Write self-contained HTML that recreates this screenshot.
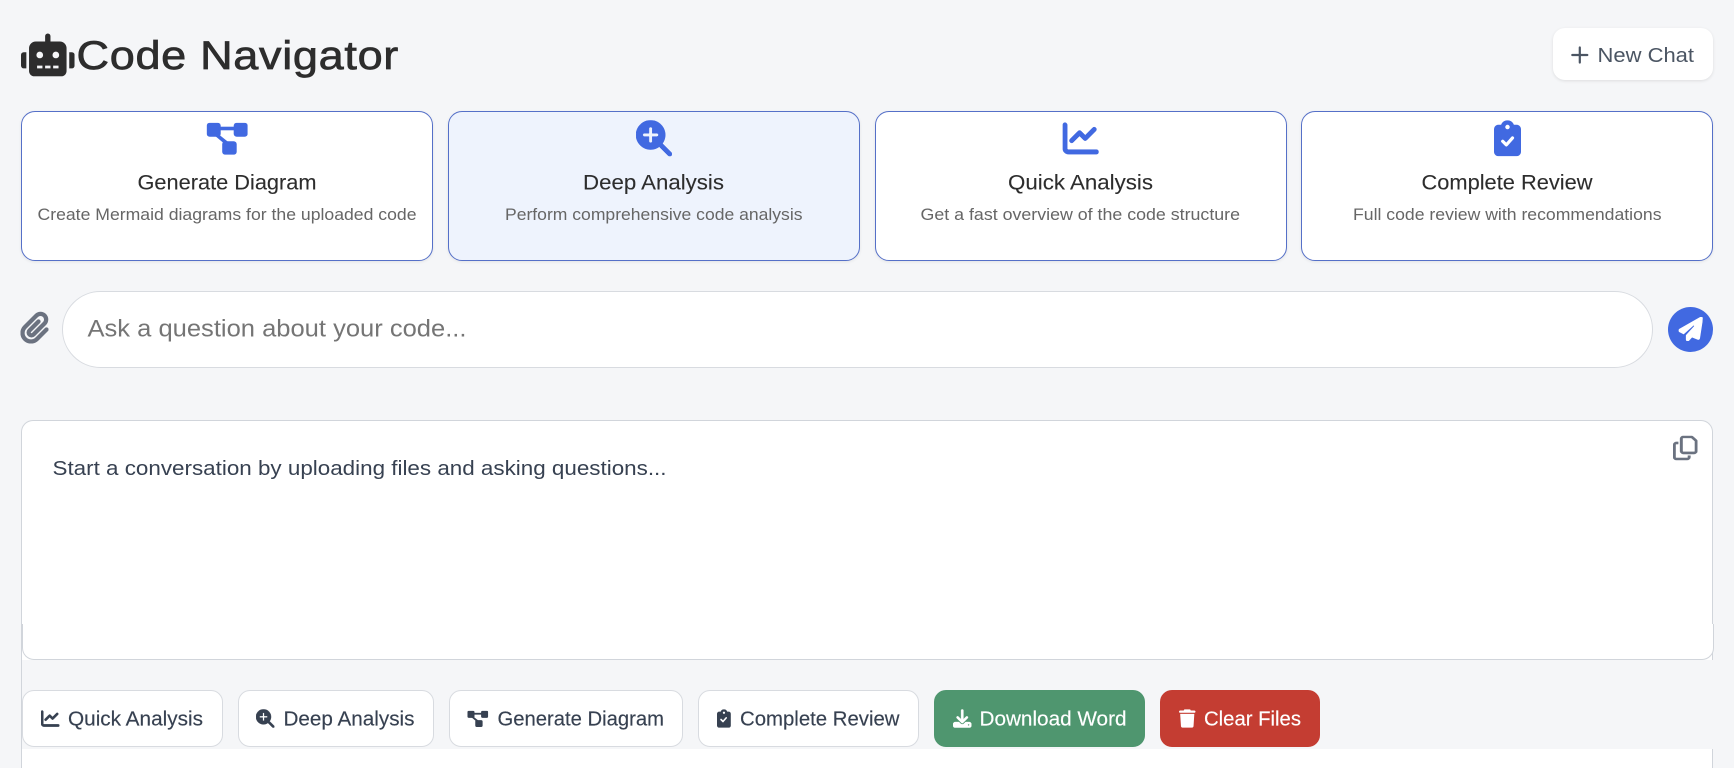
<!DOCTYPE html>
<html lang="en">
<head>
<meta charset="utf-8">
<title>Code Navigator</title>
<style>
html,body{margin:0;padding:0;width:1734px;height:768px;overflow:hidden;background:#f5f6f8;font-family:"Liberation Sans",Arial,sans-serif}
#wrap{position:relative;width:1734px;height:768px;overflow:hidden}
.b{position:absolute;box-sizing:border-box}
.card{top:111px;height:150px;width:411.5px;background:#fff;border:1px solid #5570c8;border-radius:14px;box-shadow:0 1px 3px rgba(0,0,0,.08)}
.btn{top:690px;height:57px;background:#fff;border:1px solid #d8dbe0;border-radius:12px}
svg.o{position:absolute;left:0;top:0;display:block}
text{font-family:"Liberation Sans",Arial,sans-serif}
.tt{font-size:21.6px;fill:#2d2d2d;stroke:#2d2d2d;stroke-width:.1px}
.ds{font-size:17px;fill:#666}
.bt{font-size:20px;fill:#374151;stroke:#374151;stroke-width:.15px}
.bw{font-size:20px;fill:#fff;stroke:#fff;stroke-width:.15px}
.ib{fill:#4169e1;stroke:#4169e1;stroke-width:7;stroke-linejoin:round}
.is{fill:#374151;stroke:#374151;stroke-width:12;stroke-linejoin:round}
.iw{fill:#fff;stroke:#fff;stroke-width:10;stroke-linejoin:round}
</style>
</head>
<body>
<div id="wrap">
<div class="b" style="left:1553px;top:28px;width:160px;height:52px;background:#fff;border-radius:12px;box-shadow:0 1px 3px rgba(0,0,0,.1)"></div>

<div class="b card" style="left:21px"></div>
<div class="b card" style="left:448px;background:#eef3fd"></div>
<div class="b card" style="left:875px"></div>
<div class="b card" style="left:1301px;width:412px"></div>

<div class="b" style="left:62px;top:291px;width:1591px;height:77px;background:#fff;border:1px solid #d8dbe0;border-radius:38.5px"></div>
<div class="b" style="left:1668px;top:307px;width:45px;height:45px;background:#4169e1;border-radius:50%"></div>

<div class="b" style="left:21px;top:420px;width:1692px;height:348px;background:#fff;border:1px solid #d1d5db;border-bottom:0;border-radius:12px 12px 0 0"></div>
<div class="b" style="left:22px;top:660px;width:1692px;height:89px;background:#f5f6f8"></div>
<div class="b" style="left:22px;top:624px;width:1692px;height:36px;background:#fff;border:1px solid #d1d5db;border-top:0;border-radius:0 0 12px 12px"></div>

<div class="b btn" style="left:22px;width:200.5px"></div>
<div class="b btn" style="left:238px;width:196px"></div>
<div class="b btn" style="left:449px;width:234px"></div>
<div class="b btn" style="left:698px;width:220.5px"></div>
<div class="b btn" style="left:934px;width:211px;background:#4f966f;border-color:#4f966f"></div>
<div class="b btn" style="left:1160px;width:160px;background:#c43d32;border-color:#c43d32"></div>

<svg class="o" width="1734" height="768" viewBox="0 0 1734 768" xmlns="http://www.w3.org/2000/svg">
  <defs>
    <g id="dg">
      <rect x="0" y="0" width="14" height="14" rx="3"/>
      <rect x="27" y="0" width="14" height="14" rx="3"/>
      <rect x="15.5" y="18.5" width="14.5" height="13.5" rx="3"/>
      <rect x="12" y="4" width="17" height="3.6"/>
      <path d="M7 12l3.2-1.8L22.5 20l-3 2.6z"/>
    </g>
  </defs>

  <!-- robot -->
  <svg x="21" y="33.5" width="53.6" height="42.9" viewBox="0 0 640 512"><path fill="#2d2d2d" d="M32,224H64V416H32A31.96166,31.96166,0,0,1,0,384V256A31.96166,31.96166,0,0,1,32,224Zm512-48V448a64.06328,64.06328,0,0,1-64,64H160a64.06328,64.06328,0,0,1-64-64V176a79.974,79.974,0,0,1,80-80H288V32a32,32,0,0,1,64,0V96H464A79.974,79.974,0,0,1,544,176ZM264,256a40,40,0,1,0-40,40A39.997,39.997,0,0,0,264,256Zm-8,128H192v32h64Zm96,0H288v32h64ZM456,256a40,40,0,1,0-40,40A39.997,39.997,0,0,0,456,256Zm-8,128H384v32h64ZM640,256V384a31.96166,31.96166,0,0,1-32,32H576V224h32A31.96166,31.96166,0,0,1,640,256Z"/></svg>
  <text x="76.5" y="69" font-size="40" letter-spacing="0.6" fill="#2d2d2d" stroke="#2d2d2d" stroke-width=".7" textLength="322.5" lengthAdjust="spacingAndGlyphs">Code Navigator</text>

  <!-- new chat -->
  <path d="M1579.8 47.5v15M1572.3 55h15" stroke="#4b5563" stroke-width="2.2" fill="none" stroke-linecap="round"/>
  <text x="1597.5" y="62" font-size="20" fill="#4b5563" textLength="96.5" lengthAdjust="spacingAndGlyphs">New Chat</text>

  <!-- card icons -->
  <svg x="206.7" y="122.7" width="41" height="32" viewBox="0 0 41 32" fill="#4169e1"><use href="#dg"/></svg>
  <svg x="636" y="120.3" width="36" height="36" viewBox="0 0 512 512"><path class="ib" d="M416 208c0 45.9-14.9 88.3-40 122.7L502.6 457.4c12.5 12.5 12.5 32.8 0 45.3s-32.8 12.5-45.3 0L330.7 376c-34.4 25.2-76.8 40-122.7 40C93.1 416 0 322.9 0 208S93.1 0 208 0S416 93.1 416 208zM184 296c0 13.3 10.7 24 24 24s24-10.7 24-24V232h64c13.3 0 24-10.7 24-24s-10.7-24-24-24H232V120c0-13.3-10.7-24-24-24s-24 10.7-24 24v64H120c-13.3 0-24 10.7-24 24s10.7 24 24 24h64v64z"/></svg>
  <svg x="1062.7" y="120.4" width="36" height="36" viewBox="0 0 512 512"><path class="ib" d="M64 64c0-17.7-14.3-32-32-32S0 46.3 0 64V400c0 44.2 35.8 80 80 80H480c17.7 0 32-14.3 32-32s-14.3-32-32-32H80c-8.8 0-16-7.2-16-16V64zm406.6 86.6c12.5-12.5 12.5-32.8 0-45.3s-32.8-12.5-45.3 0L320 210.7l-57.4-57.4c-12.5-12.5-32.8-12.5-45.3 0l-112 112c-12.5 12.5-12.5 32.8 0 45.3s32.8 12.5 45.3 0L240 221.3l57.4 57.4c12.5 12.5 32.8 12.5 45.3 0l128-128z"/></svg>
  <svg x="1494" y="120.3" width="27" height="36" viewBox="0 0 384 512"><path fill="#4169e1" d="M192 0c-41.8 0-77.4 26.7-90.5 64H64C28.7 64 0 92.7 0 128V448c0 35.3 28.7 64 64 64H320c35.3 0 64-28.7 64-64V128c0-35.3-28.7-64-64-64H282.5C269.4 26.7 233.8 0 192 0zm0 64a32 32 0 1 1 0 64 32 32 0 1 1 0-64z"/></svg>
  <path d="M1502.7 141.3l3.6 3.6 6.2-7" fill="none" stroke="#fff" stroke-width="3.2" stroke-linecap="round" stroke-linejoin="round"/>

  <!-- card text -->
  <text class="tt" x="137.5" y="189.3" textLength="179" lengthAdjust="spacingAndGlyphs">Generate Diagram</text>
  <text class="ds" x="37.5" y="220" textLength="379" lengthAdjust="spacingAndGlyphs">Create Mermaid diagrams for the uploaded code</text>
  <text class="tt" x="583" y="189.3" textLength="141" lengthAdjust="spacingAndGlyphs">Deep Analysis</text>
  <text class="ds" x="505" y="220" textLength="297.5" lengthAdjust="spacingAndGlyphs">Perform comprehensive code analysis</text>
  <text class="tt" x="1008" y="189.3" textLength="145" lengthAdjust="spacingAndGlyphs">Quick Analysis</text>
  <text class="ds" x="920.5" y="220" textLength="319.5" lengthAdjust="spacingAndGlyphs">Get a fast overview of the code structure</text>
  <text class="tt" x="1421.5" y="189.3" textLength="171" lengthAdjust="spacingAndGlyphs">Complete Review</text>
  <text class="ds" x="1353" y="220" textLength="308.5" lengthAdjust="spacingAndGlyphs">Full code review with recommendations</text>

  <!-- input row -->
  <svg x="20.5" y="311.5" width="28" height="32" viewBox="0 0 448 512"><path fill="#6b7280" stroke="#6b7280" stroke-width="12" stroke-linejoin="round" d="M364.2 83.8c-24.4-24.4-64-24.4-88.4 0l-184 184c-42.1 42.1-42.1 110.3 0 152.4s110.3 42.1 152.4 0l152-152c10.9-10.9 28.7-10.9 39.6 0s10.9 28.7 0 39.6l-152 152c-64 64-167.6 64-231.6 0s-64-167.6 0-231.6l184-184c46.3-46.3 121.3-46.3 167.6 0s46.3 121.3 0 167.6l-176 176c-28.6 28.6-75 28.6-103.6 0s-28.6-75 0-103.6l144-144c10.9-10.9 28.7-10.9 39.6 0s10.9 28.7 0 39.6l-144 144c-6.7 6.7-6.7 17.7 0 24.4s17.7 6.7 24.4 0l176-176c24.4-24.4 24.4-64 0-88.4z"/></svg>
  <text x="87.5" y="336.7" font-size="24" fill="#757575" textLength="379" lengthAdjust="spacingAndGlyphs">Ask a question about your code...</text>
  <svg x="1678.7" y="317" width="24" height="24" viewBox="0 0 512 512"><path fill="#fff" stroke="#fff" stroke-width="14" stroke-linejoin="round" d="M498.1 5.6c10.1 7 15.4 19.1 13.5 31.2l-64 416c-1.5 9.7-7.4 18.2-16 23s-18.9 5.4-28 1.6L284 427.7l-68.5 74.1c-8.9 9.7-22.9 12.9-35.2 8.1S160 493.2 160 480V396.4c0-4 1.5-7.8 4.2-10.7L331.8 202.8c5.8-6.3 5.6-16-.4-22s-15.7-6.4-22-.7L106 360.8 17.7 316.6C7.1 311.3 .3 300.7 0 288.9s5.9-22.8 16.1-28.7l448-256c10.7-6.1 23.9-5.5 34 1.4z"/></svg>

  <!-- response -->
  <text x="52.5" y="475" font-size="20" fill="#374151" textLength="614" lengthAdjust="spacingAndGlyphs">Start a conversation by uploading files and asking questions...</text>
  <svg x="1673" y="435.7" width="24.5" height="24.5" viewBox="0 0 448 512" preserveAspectRatio="none"><path fill="#6b7280" stroke="#6b7280" stroke-width="6" d="M384 336H192c-8.8 0-16-7.2-16-16V64c0-8.8 7.2-16 16-16l140.1 0L400 115.9V320c0 8.8-7.2 16-16 16zM192 384H384c35.3 0 64-28.7 64-64V115.9c0-12.7-5.1-24.9-14.1-33.9L366.1 14.1c-9-9-21.2-14.1-33.9-14.1H192c-35.3 0-64 28.7-64 64V320c0 35.3 28.7 64 64 64zM64 128c-35.3 0-64 28.7-64 64V448c0 35.3 28.7 64 64 64H256c35.3 0 64-28.7 64-64V416H272v32c0 8.8-7.2 16-16 16H64c-8.8 0-16-7.2-16-16V192c0-8.8 7.2-16 16-16H96V128H64z"/></svg>

  <!-- button icons -->
  <svg x="41" y="709.3" width="18.5" height="18.5" viewBox="0 0 512 512"><path class="is" d="M64 64c0-17.7-14.3-32-32-32S0 46.3 0 64V400c0 44.2 35.8 80 80 80H480c17.7 0 32-14.3 32-32s-14.3-32-32-32H80c-8.8 0-16-7.2-16-16V64zm406.6 86.6c12.5-12.5 12.5-32.8 0-45.3s-32.8-12.5-45.3 0L320 210.7l-57.4-57.4c-12.5-12.5-32.8-12.5-45.3 0l-112 112c-12.5 12.5-12.5 32.8 0 45.3s32.8 12.5 45.3 0L240 221.3l57.4 57.4c12.5 12.5 32.8 12.5 45.3 0l128-128z"/></svg>
  <svg x="256" y="709.3" width="18.5" height="18.5" viewBox="0 0 512 512"><path class="is" d="M416 208c0 45.9-14.9 88.3-40 122.7L502.6 457.4c12.5 12.5 12.5 32.8 0 45.3s-32.8 12.5-45.3 0L330.7 376c-34.4 25.2-76.8 40-122.7 40C93.1 416 0 322.9 0 208S93.1 0 208 0S416 93.1 416 208zM184 296c0 13.3 10.7 24 24 24s24-10.7 24-24V232h64c13.3 0 24-10.7 24-24s-10.7-24-24-24H232V120c0-13.3-10.7-24-24-24s-24 10.7-24 24v64H120c-13.3 0-24 10.7-24 24s10.7 24 24 24h64v64z"/></svg>
  <svg x="467.4" y="710.8" width="20.8" height="16.2" viewBox="0 0 41 32" fill="#374151"><use href="#dg"/></svg>
  <svg x="717" y="709.3" width="13.9" height="18.5" viewBox="0 0 384 512"><path fill="#374151" d="M192 0c-41.8 0-77.4 26.7-90.5 64H64C28.7 64 0 92.7 0 128V448c0 35.3 28.7 64 64 64H320c35.3 0 64-28.7 64-64V128c0-35.3-28.7-64-64-64H282.5C269.4 26.7 233.8 0 192 0zm0 64a32 32 0 1 1 0 64 32 32 0 1 1 0-64z"/></svg>
  <path d="M721 719.5l2 2 3.2-3.6" fill="none" stroke="#fff" stroke-width="1.6" stroke-linecap="round" stroke-linejoin="round"/>
  <svg x="953" y="709.3" width="18.5" height="18.5" viewBox="0 0 512 512"><path class="iw" d="M288 32c0-17.7-14.3-32-32-32s-32 14.3-32 32V274.7l-73.4-73.4c-12.5-12.5-32.8-12.5-45.3 0s-12.5 32.8 0 45.3l128 128c12.5 12.5 32.8 12.5 45.3 0l128-128c12.5-12.5 12.5-32.8 0-45.3s-32.8-12.5-45.3 0L288 274.7V32zM64 352c-35.3 0-64 28.7-64 64v32c0 35.3 28.7 64 64 64H448c35.3 0 64-28.7 64-64V416c0-35.3-28.7-64-64-64H346.5l-45.3 45.3c-25 25-65.5 25-90.5 0L165.5 352H64zm368 56a24 24 0 1 1 0 48 24 24 0 1 1 0-48z"/></svg>
  <svg x="1179" y="709.3" width="16.5" height="18.5" viewBox="0 0 448 512" preserveAspectRatio="none"><path fill="#fff" d="M135.2 17.7L128 32H32C14.3 32 0 46.3 0 64S14.3 96 32 96H416c17.7 0 32-14.3 32-32s-14.3-32-32-32H320l-7.2-14.3C307.4 6.8 296.3 0 284.2 0H163.8c-12.1 0-23.2 6.8-28.6 17.7zM416 128H32L53.2 467c1.6 25.3 22.6 45 47.9 45H346.9c25.3 0 46.3-19.7 47.9-45L416 128z"/></svg>

  <!-- button text -->
  <text class="bt" x="68" y="725.7" textLength="135" lengthAdjust="spacingAndGlyphs">Quick Analysis</text>
  <text class="bt" x="283.5" y="725.7" textLength="131" lengthAdjust="spacingAndGlyphs">Deep Analysis</text>
  <text class="bt" x="497.5" y="725.7" textLength="166.5" lengthAdjust="spacingAndGlyphs">Generate Diagram</text>
  <text class="bt" x="740" y="725.7" textLength="159.5" lengthAdjust="spacingAndGlyphs">Complete Review</text>
  <text class="bw" x="979.5" y="725.7" textLength="147" lengthAdjust="spacingAndGlyphs">Download Word</text>
  <text class="bw" x="1204" y="725.7" textLength="97" lengthAdjust="spacingAndGlyphs">Clear Files</text>
</svg>
</div>
</body>
</html>
